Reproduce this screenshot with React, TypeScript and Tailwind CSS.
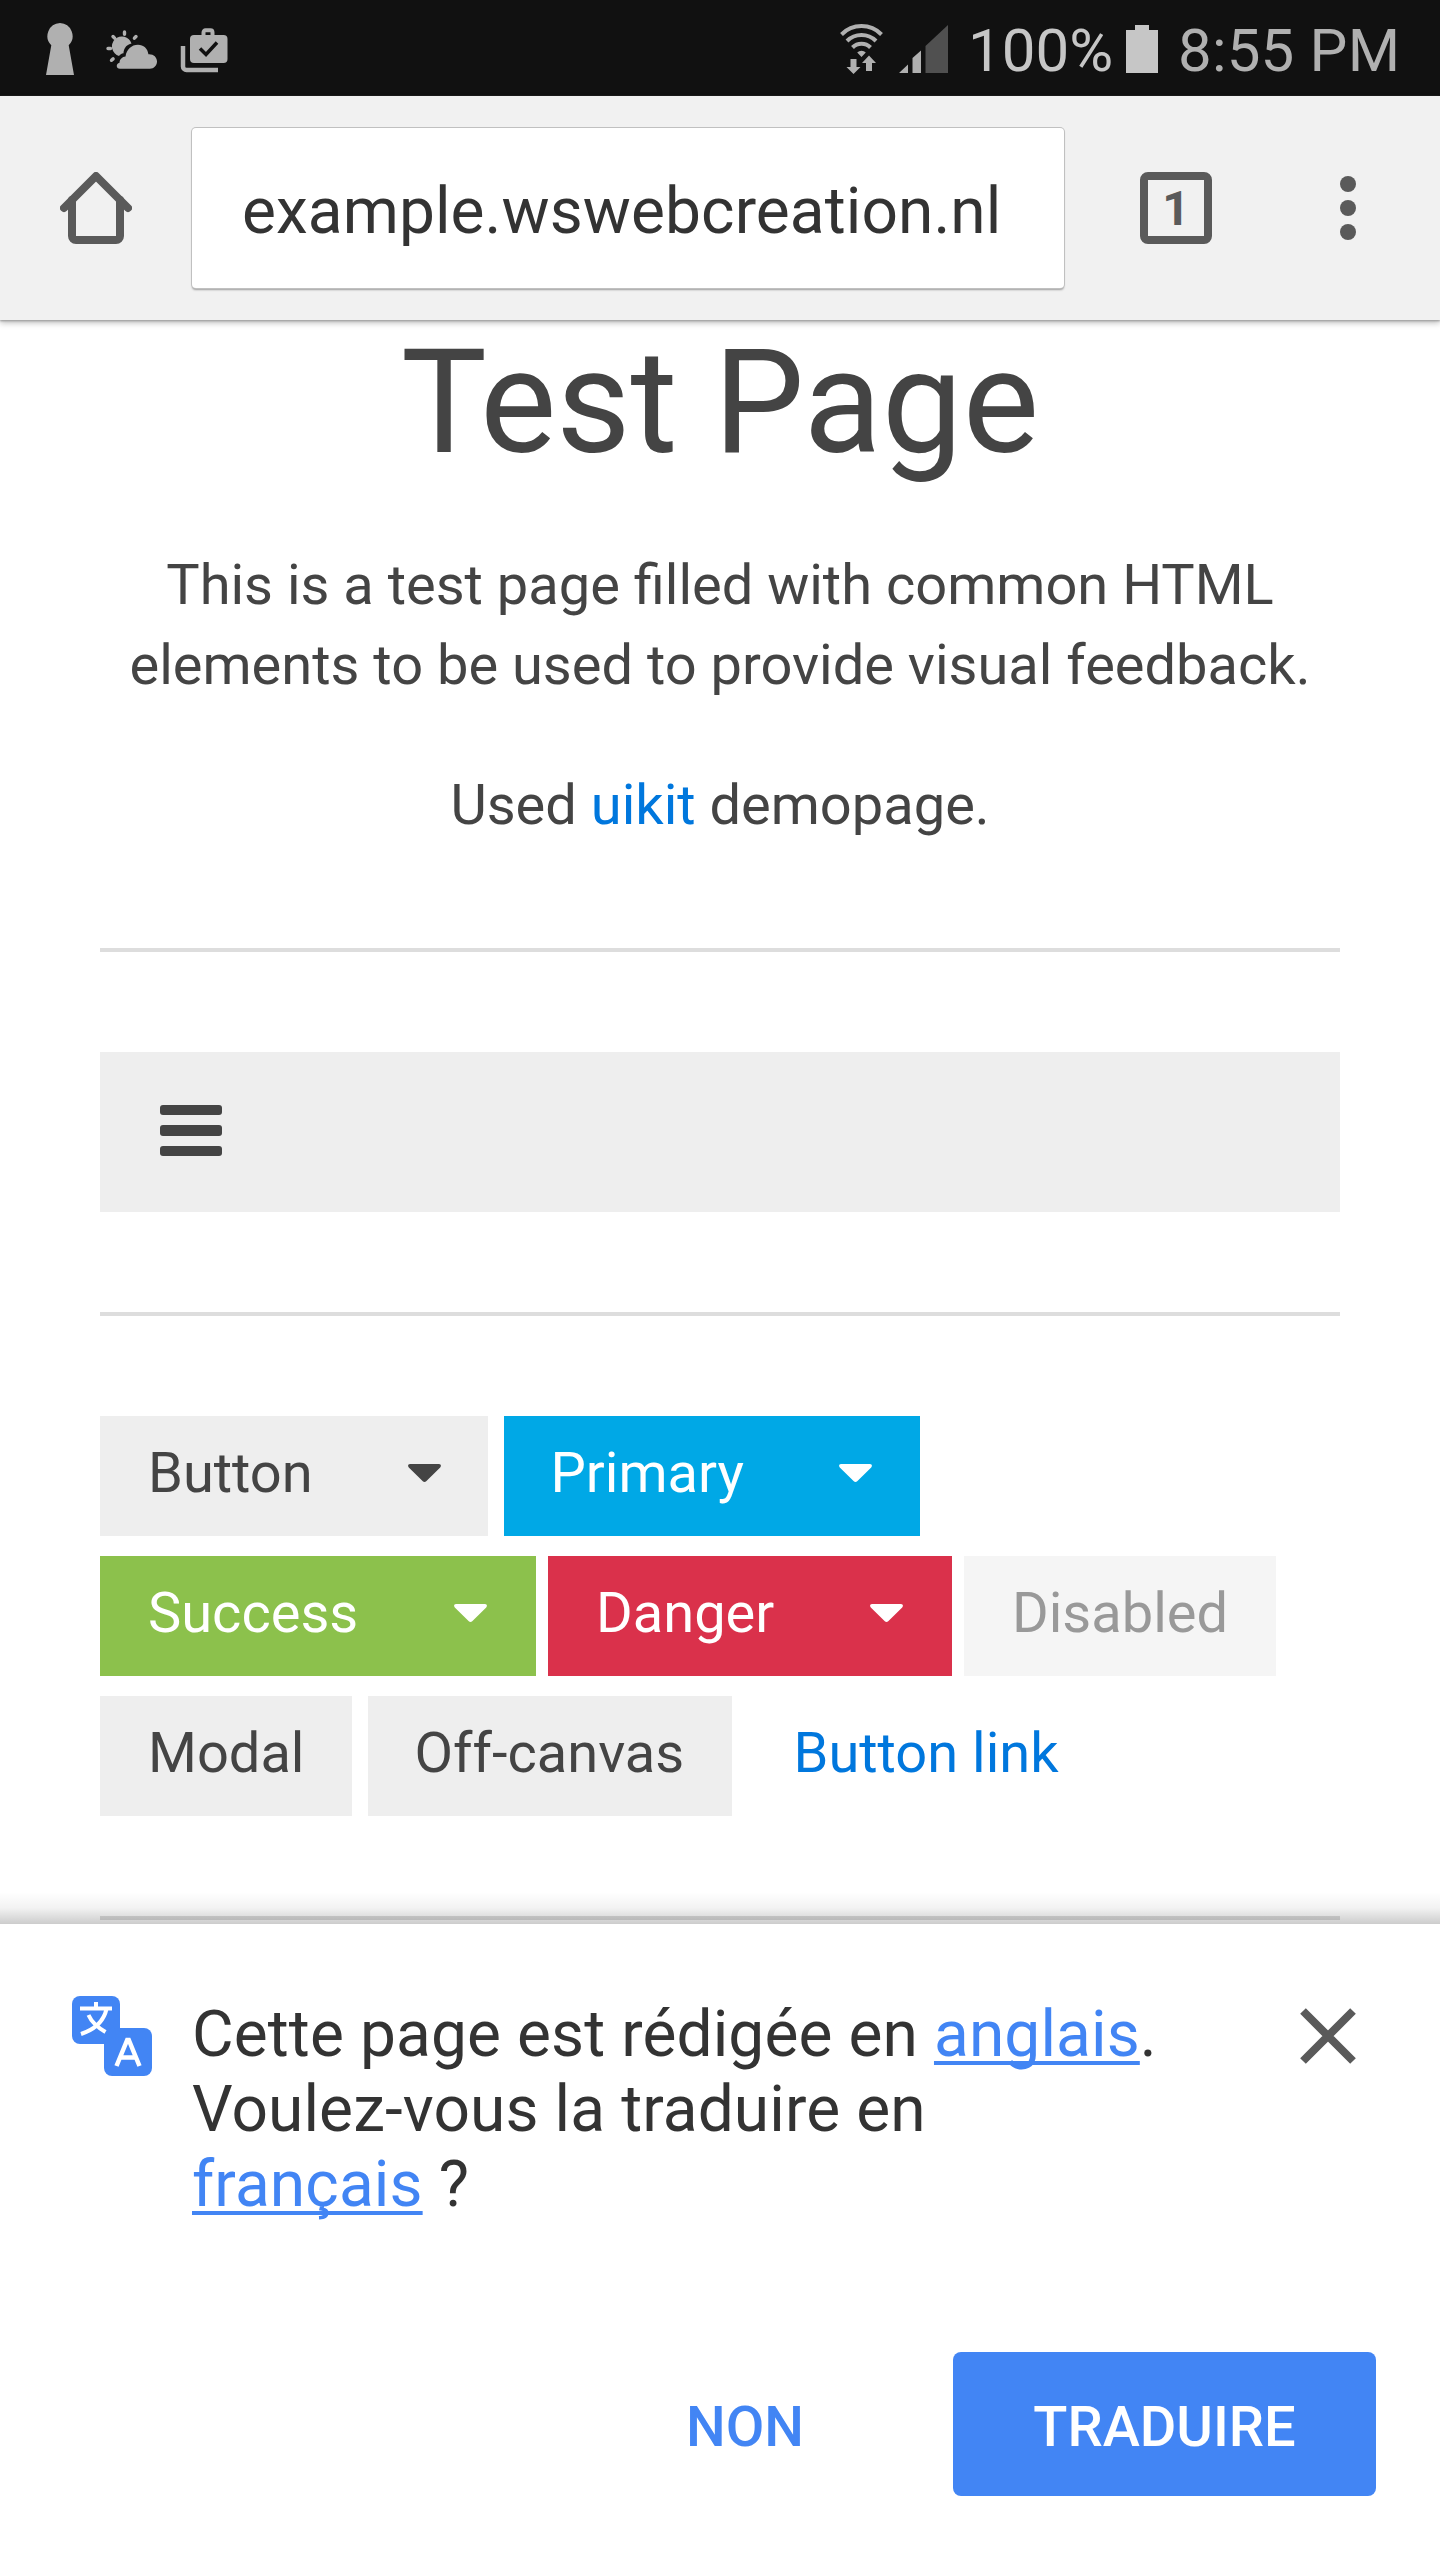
import React from "react";

type ButtonProps = {
  label: string;
  className: string;
  caret?: string;
};

function Caret({ className }: { className: string }) {
  return (
    <svg className={"absolute top-[48px] h-[18px] w-[33px] " + className} viewBox="0 0 33 18" fill="currentColor">
      <path d="M2 0h29c1.800 0 2.600 2 1.200 3.400L18.200 17.200c-1 1-2.400 1-3.400 0L.8 3.400C-.6 2 .2 0 2 0Z" />
    </svg>
  );
}

function Button({ label, className, caret }: ButtonProps) {
  return (
    <button className={"relative h-[120px] shrink-0 whitespace-nowrap pb-[6px] text-left text-[56px] leading-[114px] " + className}>
      {label}
      {caret && <Caret className={caret} />}
    </button>
  );
}

function StatusBar() {
  return (
    <div className="flex h-24 shrink-0 items-start bg-[#111] text-[#b0b0b0]">
      <svg className="ml-[46px] mt-[23px] h-[52px] w-[28px]" viewBox="0 0 28 52" fill="currentColor">
        <path d="M14 0a13 13 0 0 1 8.700 22.200L28 52H0L5.300 22.200A13 13 0 0 1 14 0Z" />
      </svg>
      <svg className="ml-[32px] mt-[30px] h-[40px] w-[52px]" viewBox="0 0 52 40" fill="currentColor">
        <g stroke="currentColor" strokeWidth="3.400" strokeLinecap="round">
          <path d="M18.500 2v2.200M7 6.500l1.600 1.700M30 6.500l-1.600 1.700M2 18.500h2.500M5.500 30.300l1.600-1.400" />
        </g>
        <path d="M13 26a10 10 0 1 1 12.500-12.400C19 15 17.800 20 17.500 23.200c-2 .2-3.500 1.300-4.500 2.800Z" />
        <path d="M14 38.700c-4.200 0-4.200-5.200-.5-6 .2-3.300 2.700-6 6-6.200 1-7 6-11.800 12.500-11.800 5.500 0 9.700 3.800 10.400 9.500 5-.4 8.600 2.800 8.600 7.300 0 4-3 7.200-7.200 7.200Z" />
      </svg>
      <svg className="ml-[22px] mt-[28px] h-[45px] w-[48px]" viewBox="0 0 48 45">
        <path d="M3 18v20.500a3.500 3.500 0 0 0 3.500 3.500H38" fill="none" stroke="currentColor" strokeWidth="4.500" />
        <path d="M23.500 8V4.500c0-1.500 1-2.300 2-2.300h5c1 0 2 .8 2 2.300V8" fill="none" stroke="currentColor" strokeWidth="4" />
        <rect x="10" y="7" width="37.500" height="28" rx="4" fill="currentColor" />
        <path d="m20 20.500 6 6L37 14.500" fill="none" stroke="#111" strokeWidth="3.500" />
      </svg>
      <svg className="ml-[612px] mt-[24px] h-[50px] w-[43px]" viewBox="0 0 43 50" fill="currentColor">
        <g fill="none" stroke="currentColor" strokeWidth="4">
          <path d="M1.500 10.500a28 28 0 0 1 40 0M7 17a20.500 20.500 0 0 1 29 0M12.500 23.500a12.500 12.500 0 0 1 18 0" />
        </g>
        <path d="M21.500 33l-4.300-4.500a6 6 0 0 1 8.600 0ZM10.500 35h6v8h4L13.500 50l-7-7h4ZM26 47v-8h-4l7-7.500 7 7.500h-4v8Z" />
      </svg>
      <svg className="ml-[16px] mt-[25px] h-[48px] w-[50px]" viewBox="0 0 50 48">
        <path d="M0 48 9 39.500V48ZM13.500 48V33L22 25.500V48Z" fill="currentColor" />
        <path d="M26.500 48V21L49 0v48Z" fill="#505050" />
      </svg>
      <span className="ml-[19px] mt-[15px] w-[149px] whitespace-nowrap text-[60px] leading-[72px] text-[#c6c6c6]">100%</span>
      <svg className="ml-[9px] mt-[25px] h-[48px] w-[32px]" viewBox="0 0 32 48" fill="#c6c6c6">
        <path d="M0 5h9V0h14v5h9v43H0Z" />
      </svg>
      <span className="ml-[20px] mt-[15px] whitespace-nowrap text-[60px] leading-[72px] tracking-[0.200px]">8:55 PM</span>
    </div>
  );
}

function BrowserToolbar() {
  return (
    <header className="relative z-10 flex h-56 shrink-0 items-start bg-[#f1f1f1] text-[#5a5a5a] shadow-[0_1px_2px_#999,0_3px_6px_rgba(0,0,0,0.250)]">
      <svg className="ml-[60px] mt-[76px] h-[72px] w-[72px]" viewBox="0 0 72 72" fill="none" stroke="currentColor" strokeWidth="8" strokeLinecap="round">
        <path d="M4 36 36 4l32 32" strokeLinejoin="round" />
        <path d="M12 28v36a4 4 0 0 0 4 4h40a4 4 0 0 0 4-4V28" />
      </svg>
      <div className="ml-[60px] mt-8 h-[160px] w-[872px] whitespace-nowrap rounded-[4px] bg-white pl-[50px] text-[64px] leading-[168px] tracking-[0.080px] text-[#333] shadow-[0_0_0_1px_#c0c0c0,0_2px_2px_rgba(0,0,0,0.350)]">
        example.wswebcreation.nl
      </div>
      <div className="ml-[76px] mt-[76px] flex h-[72px] w-[72px] items-center justify-center rounded-[8px] border-8 border-[#5a5a5a] pt-[2px] text-[48px] font-bold leading-none">
        1
      </div>
      <svg className="ml-32 mt-[80px] h-16 w-4" viewBox="0 0 16 64" fill="currentColor">
        <circle cx="8" cy="8" r="8" />
        <circle cx="8" cy="32" r="8" />
        <circle cx="8" cy="56" r="8" />
      </svg>
    </header>
  );
}

function TranslateBar() {
  return (
    <aside className="relative flex h-[636px] shrink-0 flex-col bg-white">
      <div className="absolute -top-8 left-0 h-8 w-full bg-linear-to-b from-transparent via-black/5 to-black/20" />
      <div className="flex h-[428px] items-start">
        <svg className="ml-[72px] mt-[72px] h-20 w-20" viewBox="0 0 80 80">
          <rect width="48" height="48" rx="8" fill="#4285f4" />
          <rect x="32" y="32" width="48" height="48" rx="8" fill="#4285f4" />
          <path d="M8 12.500h32M24 6v6.500M34.500 13C32 24 24 33 9 38M16.500 19c3 7 8.500 12 17 17" fill="none" stroke="#fff" strokeWidth="4" />
          <path d="M44.500 70 55.200 44h1.600l10.700 26M48.500 61.500h15" fill="none" stroke="#fff" strokeWidth="4.500" />
        </svg>
        <p className="ml-10 mt-[73px] w-[1000px] text-[64px] leading-[75px] tracking-[0.110px] text-[#333]">
          Cette page est rédigée en <a className="text-[#4285f4] underline decoration-4 underline-offset-[5px] [text-decoration-skip-ink:none]">anglais</a>.<br />
          Voulez-vous la traduire en<br />
          <a className="text-[#4285f4] underline decoration-4 underline-offset-[5px] [text-decoration-skip-ink:none]">français</a> ?
        </p>
        <svg className="ml-[108px] mt-[84px] h-14 w-14" viewBox="0 0 56 56" fill="none" stroke="#5a5a5a" strokeWidth="8">
          <path d="m3 3 50 50M53 3 3 53" />
        </svg>
      </div>
      <div className="flex justify-end pr-16 text-[56px] font-medium">
        <button className="mr-[149px] h-36 pt-[6px] text-[#4285f4]">NON</button>
        <button className="h-36 w-[423px] rounded-[8px] bg-[#4285f4] pt-[6px] text-white">TRADUIRE</button>
      </div>
    </aside>
  );
}

export default function App() {
  return (
    <div className="flex h-[2560px] w-[1440px] flex-col overflow-hidden bg-white font-['Roboto',sans-serif] text-[#444]">
      <StatusBar />
      <BrowserToolbar />
      <main className="h-[1604px] shrink-0 px-[100px]">
        <h1 className="-mt-px text-center text-[144px] leading-[168px]">Test Page</h1>
        <p className="mt-[58px] text-center text-[56px] leading-[80px]">
          This is a test page filled with common HTML<br />elements to be used to provide visual feedback.
        </p>
        <p className="mt-[60px] text-center text-[56px] leading-[80px]">
          Used <a className="text-[#07d]">uikit</a> demopage.
        </p>
        <hr className="mt-[103px] border-t-4 border-[#ddd]" />
        <nav className="mt-[100px] h-[160px] bg-[#eee] pl-[60px] pt-[52.500px]">
          <div className="flex w-[62px] flex-col gap-[10px]">
            <i className="h-[10.500px] rounded-[3px] bg-[#444]" />
            <i className="h-[10.500px] rounded-[3px] bg-[#444]" />
            <i className="h-[10.500px] rounded-[3px] bg-[#444]" />
          </div>
        </nav>
        <hr className="mt-[100px] border-t-4 border-[#ddd]" />
        <div className="mt-[100px] flex flex-col gap-5">
          <div className="flex gap-4">
            <Button label="Button" caret="right-[47px]" className="w-[388px] bg-[#eee] pl-12" />
            <Button label="Primary" caret="right-[48px]" className="w-[416px] bg-[#00a8e6] pl-[46.500px] text-white" />
          </div>
          <div className="flex gap-3">
            <Button label="Success" caret="right-[49px]" className="w-[436px] bg-[#8cc14c] pl-12 text-white" />
            <Button label="Danger" caret="right-[49px]" className="w-[404px] bg-[#da314b] pl-12 text-white" />
            <Button label="Disabled" className="w-[312px] bg-[#f5f5f5] pl-12 text-[#999]" />
          </div>
          <div className="flex gap-4">
            <Button label="Modal" className="w-[252px] bg-[#eee] pl-12" />
            <Button label="Off-canvas" className="w-[364px] bg-[#eee] pl-[46.500px]" />
            <Button label="Button link" className="pl-[45.500px] text-[#07d]" />
          </div>
        </div>
        <hr className="mt-[100px] border-t-4 border-[#ddd]" />
      </main>
      <TranslateBar />
    </div>
  );
}
